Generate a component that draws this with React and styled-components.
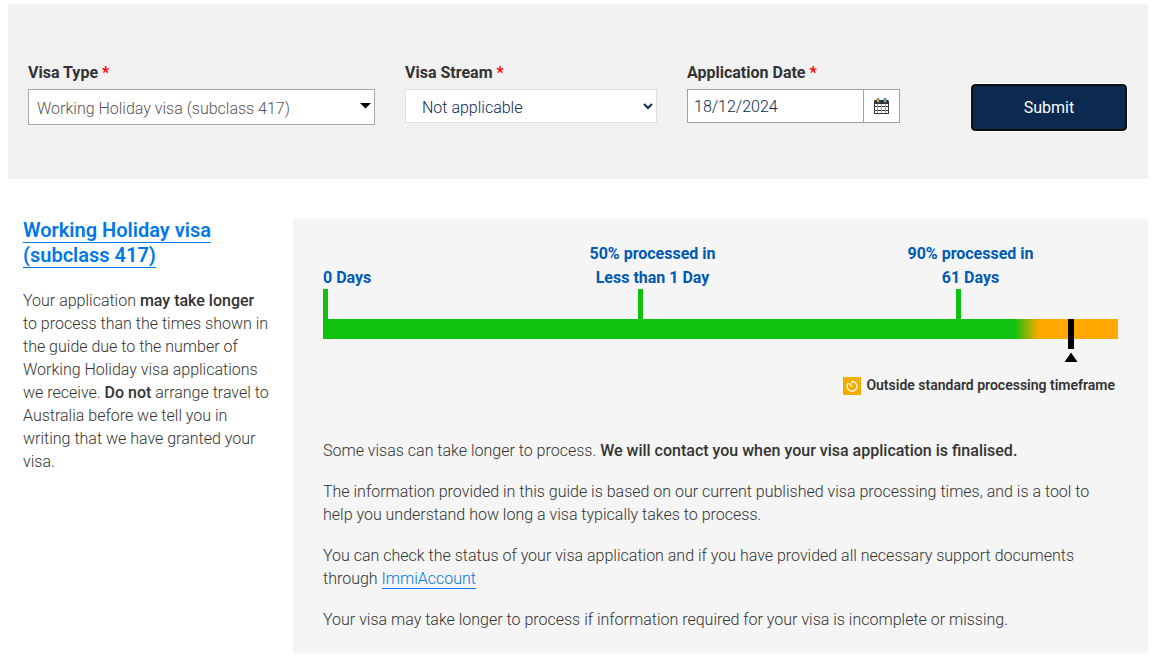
import React, { useState } from 'react';
import styled, { createGlobalStyle } from 'styled-components';

const GlobalStyle = createGlobalStyle`
  *, *::before, *::after { box-sizing: border-box; }
  body {
    margin: 0;
    background: #fff;
    color: #333;
    font: 300 16px/23px Roboto, "Liberation Sans", sans-serif;
  }
  b { font-weight: 500; }
`;

const Page = styled.main`
  padding: 4px 6px 8px 8px;
`;

const SearchForm = styled.form`
  display: grid;
  grid-template-columns: minmax(0, 347fr) minmax(0, 252fr) minmax(0, 213fr) minmax(0, 197fr);
  column-gap: 30px;
  align-items: start;
  padding: 56px 21px 48px 20px;
  background: #f1f1f1;
`;

const Field = styled.div`
  display: flex;
  flex-direction: column;
  gap: 3px;
`;

const Label = styled.label`
  font-weight: 700;
  line-height: 26px;
`;

const Required = styled.span`
  color: #f00;
`;

const SelectBox = styled.div`
  display: grid;
  align-items: center;
  > * { grid-area: 1 / 1; }
`;

const Select = styled.select`
  appearance: none;
  width: 100%;
  height: ${(p) => (p.$outlined ? 36 : 34)}px;
  margin: 0;
  padding: ${(p) => (p.$outlined ? '2px 8px 0' : '2px 16px 0')};
  border: 1px solid ${(p) => (p.$outlined ? '#a9a9a9' : '#e0e0e0')};
  border-radius: 0;
  background: #fff;
  color: ${(p) => (p.$outlined ? '#555' : '#0c2a50')};
  font: inherit;
`;

const SelectArrow = styled.svg`
  justify-self: end;
  margin-right: 4px;
  pointer-events: none;
`;

const DateGroup = styled.div`
  display: flex;
  height: 34px;
  border: 1px solid #a0a0a0;
  background: #fff;
`;

const DateInput = styled.input`
  flex: 1;
  min-width: 0;
  padding: 0 6px;
  border: 0;
  background: transparent;
  color: #0c2a50;
  font: inherit;
`;

const CalendarButton = styled.button`
  display: grid;
  place-items: center;
  width: 36px;
  padding: 0;
  border: 0;
  border-left: 1px solid #a0a0a0;
  background: #fff;
`;

const SubmitButton = styled.button`
  justify-self: end;
  width: 156px;
  height: 47px;
  margin-top: 24px;
  border: 2px solid #101010;
  border-radius: 4px;
  outline: 1px solid #fff;
  background: #0c2a50;
  color: #fff;
  font: 400 16px/24px Roboto, "Liberation Sans", sans-serif;
`;

const Results = styled.div`
  display: grid;
  grid-template-columns: 1fr 3fr;
  padding-top: 39px;
`;

const Summary = styled.aside`
  padding: 0 23px 0 15px;
`;

const Title = styled.h2`
  margin: 0 0 21px;
  font-size: 20px;
  font-weight: 600;
  line-height: 25px;
`;

const Link = styled.a`
  border-bottom: 1px solid #0078e7;
  color: #0078e7;
  text-decoration: none;
`;

const Text = styled.p`
  margin: 0 0 18px;
`;

const Panel = styled.section`
  margin-top: 1px;
  padding: 23px 30px 4px;
  background: #f5f5f5;
`;

const Milestones = styled.div`
  display: grid;
  grid-template-columns: 315fr 318fr 162fr;
  align-items: end;
`;

const Milestone = styled.div`
  width: 5px;
  display: flex;
  flex-direction: column;
  align-items: ${(p) => (p.$start ? 'flex-start' : 'center')};
  color: #005ab4;
  font-weight: 700;
  line-height: 24px;
  text-align: center;
  white-space: nowrap;
`;

const MilestoneLabel = styled.span`
  padding-left: ${(p) => (p.$centred ? 24 : 0)}px;
`;

const Tick = styled.span`
  width: 5px;
  height: 30px;
  margin-top: -1px;
  background: #0fc20f;
`;

const Track = styled.div`
  display: flex;
  justify-content: flex-end;
  height: 38px;
  padding-right: 40px;
  margin-bottom: 17px;
  background: linear-gradient(90deg, #0fc20f 87%, #ffa800 90%) top / 100% 20px no-repeat;
`;

const Status = styled.div`
  display: flex;
  align-items: center;
  justify-content: flex-end;
  gap: 5px;
  padding-right: 3px;
  margin-bottom: 42px;
  color: #333;
  font-size: 14px;
  font-weight: 600;
`;

export default function App() {
  const [date, setDate] = useState('18/12/2024');
  return (
    <>
      <GlobalStyle />
      <Page>
        <SearchForm onSubmit={(e) => e.preventDefault()}>
          <Field>
            <Label htmlFor="visa-type">Visa Type <Required>*</Required></Label>
            <SelectBox>
              <Select id="visa-type" $outlined>
                <option>Working Holiday visa (subclass 417)</option>
              </Select>
              <SelectArrow width="11" height="9" viewBox="0 0 11 9" aria-hidden="true">
                <path d="M0 0H11L5.500 5.500Z" fill="#000" />
              </SelectArrow>
            </SelectBox>
          </Field>
          <Field>
            <Label htmlFor="visa-stream">Visa Stream <Required>*</Required></Label>
            <SelectBox>
              <Select id="visa-stream">
                <option>Not applicable</option>
              </Select>
              <SelectArrow width="10" height="7" viewBox="0 0 10 7" aria-hidden="true">
                <path d="M1 1L5 5L9 1" fill="none" stroke="#0c2a50" strokeWidth="2" />
              </SelectArrow>
            </SelectBox>
          </Field>
          <Field>
            <Label htmlFor="application-date">Application Date <Required>*</Required></Label>
            <DateGroup>
              <DateInput id="application-date" value={date} onChange={(e) => setDate(e.target.value)} />
              <CalendarButton type="button" aria-label="Choose date">
                <svg width="15" height="16" viewBox="0 0 15 16" aria-hidden="true">
                  <path d="M1 2H14L15 3V16H0V3Z" fill="#333" />
                  <path d="M1 6h2v2H1zM4 6h3v2H4zM8 6h3v2H8zM12 6h2v2h-2zM1 9h2v3H1zM4 9h3v3H4zM8 9h3v3H8zM12 9h2v3h-2zM1 13h2v2H1zM4 13h3v2H4zM8 13h3v2H8zM12 13h2v2h-2z" fill="#fff" />
                  <path d="M3.500 6V15M11.500 6V15" stroke="#6bafe0" />
                  <path d="M7.500 6V15" stroke="#e3a265" />
                  <path d="M4 1.500V4M11 1.500V4" stroke="#45525e" strokeWidth="3" strokeLinecap="round" />
                  <path d="M4 1V4" stroke="#e3a265" strokeWidth="2" />
                  <path d="M11 1V4" stroke="#6bafe0" strokeWidth="2" />
                </svg>
              </CalendarButton>
            </DateGroup>
          </Field>
          <SubmitButton type="submit">Submit</SubmitButton>
        </SearchForm>
        <Results>
          <Summary>
            <Title><Link href="#visa">Working Holiday visa (subclass 417)</Link></Title>
            <Text>
              Your application <b>may take longer</b> to process than the times shown in the guide due to the
              number of Working Holiday visa applications we receive. <b>Do not</b> arrange travel to Australia
              before we tell you in writing that we have granted your visa.
            </Text>
          </Summary>
          <Panel>
            <Milestones>
              <Milestone $start>
                <MilestoneLabel>0 Days</MilestoneLabel>
                <Tick />
              </Milestone>
              <Milestone>
                <MilestoneLabel $centred>50% processed in<br />Less than 1 Day</MilestoneLabel>
                <Tick />
              </Milestone>
              <Milestone>
                <MilestoneLabel $centred>90% processed in<br />61 Days</MilestoneLabel>
                <Tick />
              </Milestone>
            </Milestones>
            <Track>
              <svg width="14" height="43" viewBox="0 0 14 43" aria-hidden="true">
                <path d="M4 0H10V30H4ZM7 33.500L13.500 43H0.500Z" />
              </svg>
            </Track>
            <Status>
              <svg width="18" height="18" viewBox="0 0 18 18" aria-hidden="true">
                <path d="M0 0H18V18H0Z" fill="#f5ac00" />
                <path d="M9 6.500V4.300A4.900 4.900 0 1 1 5.300 6M9.300 9.700L6 6.200" fill="none" stroke="#fff" strokeWidth="1.200" />
              </svg>
              <span>Outside standard processing timeframe</span>
            </Status>
            <Text>Some visas can take longer to process. <b>We will contact you when your visa application is finalised.</b></Text>
            <Text>
              The information provided in this guide is based on our current published visa processing times, and
              is a tool to help you understand how long a visa typically takes to process.
            </Text>
            <Text>
              You can check the status of your visa application and if you have provided all necessary support
              documents through <Link href="#immiaccount">ImmiAccount</Link>
            </Text>
            <Text>Your visa may take longer to process if information required for your visa is incomplete or missing.</Text>
          </Panel>
        </Results>
      </Page>
    </>
  );
}
